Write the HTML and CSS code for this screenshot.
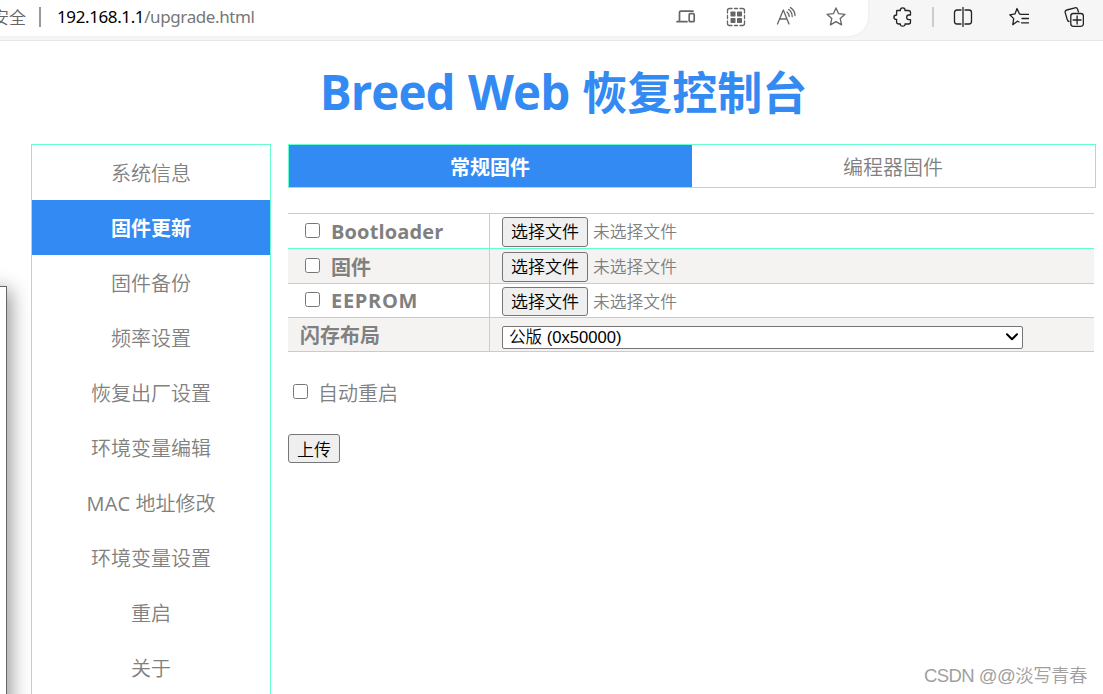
FILE: index.html
```html
<!DOCTYPE html>
<html lang="zh-CN">
<head>
<meta charset="utf-8">
<title>Breed Web 恢复控制台</title>
<link rel="stylesheet" href="styles.css">
</head>
<body>
<header class="toolbar">
  <div class="address">
    <div class="security">安全</div>
    <div class="address-sep"></div>
    <div class="url"><b class="host">192.168.1.1</b>/upgrade.html</div>
    <div class="address-icons">
      <svg class="device" width="20" height="20" viewBox="0 0 20 20"><path d="M3.500 13.500V5.500Q3.500 4.200 4.800 4.200H17M1 14.700H11" /><rect x="13.200" y="6.700" width="5" height="8" rx="1"/></svg>
      <svg width="20" height="20" viewBox="0 0 20 20"><path d="M1.500 6V3.500Q1.500 1.500 3.500 1.500H6M8.500 1.500h3M14 1.500h2.500Q18.500 1.500 18.500 3.500V6M1.500 8.500v3M18.500 8.500v3M1.500 14v2.500Q1.500 18.500 3.500 18.500H6M8.500 18.500h3M14 18.500h2.500Q18.500 18.500 18.500 16.500V14"/><g class="solid"><rect x="4.500" y="4.500" width="5" height="5" rx=".7"/><rect x="11" y="4.500" width="5" height="5" rx=".7"/><rect x="4.500" y="11" width="5" height="5" rx=".7"/><rect x="11" y="11" width="5" height="5" rx=".7"/></g></svg>
      <svg width="20" height="20" viewBox="0 0 20 20"><path d="M1.500 17L7.300 3L13 17M3.600 12H11M11 5Q13.200 6.800 13.200 9.500M12.700 2.500Q16.200 5 16.200 9.500M14.500.6Q19 3.500 19 8.500"/></svg>
      <svg width="20" height="20" viewBox="0 0 20 20"><path d="M10 .9L12.600 6.700L19 7.300L14.200 11.600L15.600 17.900L10 14.600L4.400 17.900L5.800 11.600L1 7.300L7.400 6.700Z"/></svg>
    </div>
  </div>
  <div class="actions">
    <svg width="20" height="20" viewBox="0 0 20 20"><path d="M4 3.500H7.400Q7.200 .8 9.700 .8Q12.200 .8 12 3.500H15Q17.500 3.500 17.500 5.500V8H15.700Q13.700 8 13.700 10.300Q13.700 12.600 15.700 12.600H17.500V15Q17.500 17 15.500 17H12Q12.200 19.200 9.700 19.200Q7.200 19.200 7.400 17H6Q3.600 17 3.600 15V12.500Q.9 12.500.9 10.200Q.9 8 3.600 8V5Q3.600 3.500 4 3.500Z"/></svg>
    <div class="action-sep"></div>
    <svg width="20" height="20" viewBox="0 0 20 20"><path d="M8 3H4Q1.500 3 1.500 5.500V14.500Q1.500 17 4 17H8M12 3H16Q18.500 3 18.500 5.500V14.500Q18.500 17 16 17H12M10 .5V19.500"/></svg>
    <svg width="20" height="20" viewBox="0 0 20 20"><path d="M10 15L8.400 14.200L3.800 17.700L4.700 11.600L.8 7.800L6 6.900L8 1.500L10.500 6.900L12 7.300H19.500M13 11.500H19.500M12.500 15.800H19.500"/></svg>
    <svg width="20" height="20" viewBox="0 0 20 20"><path d="M14.500 5L13.500 2Q13 .3 11 .8L2.800 3Q.7 3.600 1.200 5.600L3.200 12.500Q3.700 14.200 5 14.500"/><rect x="6.800" y="6.500" width="12.600" height="12.800" rx="2.500"/><path d="M13.100 9V17M9.100 13H17.100"/></svg>
  </div>
</header>
<main class="page">
  <h1 class="title"><span class="title-latin">Breed Web</span>恢复控制台</h1>
  <div class="columns">
    <nav class="menu">
      <a>系统信息</a>
      <a class="current">固件更新</a>
      <a>固件备份</a>
      <a>频率设置</a>
      <a>恢复出厂设置</a>
      <a>环境变量编辑</a>
      <a><span><span class="mac">MAC</span> 地址修改</span></a>
      <a>环境变量设置</a>
      <a>重启</a>
      <a>关于</a>
    </nav>
    <form class="content">
      <div class="tabs"><a class="current">常规固件</a><a>编程器固件</a></div>
      <div class="table">
        <div class="row">
          <label class="head"><input type="checkbox"><span class="boot">Bootloader</span></label>
          <div class="cell"><button type="button" class="btn file">选择文件</button><span class="none">未选择文件</span></div>
        </div>
        <div class="row shade">
          <label class="head"><input type="checkbox"><span class="cjk">固件</span></label>
          <div class="cell"><button type="button" class="btn file">选择文件</button><span class="none">未选择文件</span></div>
        </div>
        <div class="row low">
          <label class="head"><input type="checkbox"><span class="eeprom">EEPROM</span></label>
          <div class="cell"><button type="button" class="btn file">选择文件</button><span class="none">未选择文件</span></div>
        </div>
        <div class="row low shade">
          <div class="head"><span class="cjk">闪存布局</span></div>
          <div class="cell layout-cell"><div class="select"><span>公版 (0x50000)</span><svg width="12" height="8" viewBox="0 0 12 8"><path d="M1 1.200L6 6.200L11 1.200"/></svg></div></div>
        </div>
      </div>
      <label class="reboot"><input type="checkbox"><span>自动重启</span></label>
      <button type="button" class="btn upload">上传</button>
    </form>
  </div>
</main>
<div class="window-edge"></div>
<div class="watermark">CSDN @@淡写青春</div>
</body>
</html>
```
FILE: styles.css
```css
* { box-sizing: border-box; }
body {
  margin: 0;
  width: 1103px;
  height: 694px;
  overflow: hidden;
  position: relative;
  background: #fff;
  color: #808080;
  font: 350 20px/1 "Open Sans", "Noto Sans CJK SC", sans-serif;
}
svg { display: block; flex: none; fill: none; stroke: #666; stroke-width: 1.3; stroke-linejoin: round; stroke-linecap: round; }
.solid { fill: #666; stroke: none; }
.device { stroke-width: 1.7; }
.toolbar { height: 41px; display: flex; background: #f6f6f6; border-bottom: 1px solid #e6e6e6; }
.address {
  flex: none; width: 868px; height: 36px; display: flex; align-items: center; padding-bottom: 2px;
  background: #fff; border-radius: 0 0 19px 0; box-shadow: 0 0 3px #e4e4e4;
  font-size: 17px;
}
.security { width: 26px; display: flex; justify-content: flex-end; color: #666; white-space: nowrap; }
.address-sep { width: 2px; height: 20px; margin: 0 17px 0 13px; background: #999; }
.url { font-family: "Noto Sans", sans-serif; font-weight: 400; letter-spacing: -.39px; color: #777; width: 619px; padding-bottom: 2px; margin-left: -1px; white-space: nowrap; }
.host { font-weight: 400; color: #000; }
.address-icons { display: flex; gap: 30px; }
.actions { display: flex; align-items: center; height: 34px; padding-left: 25px; }
.actions svg { stroke: #222; margin-right: 36px; }
.actions svg:first-child { margin-right: 19px; }
.actions svg:nth-last-child(2) { margin-right: 35px; }
.actions svg:last-child { margin-right: 0; }
.action-sep { width: 2px; height: 20px; margin-right: 19px; background: #ccc; }
.page { padding: 26px 7px 0 31px; }
.title {
  margin: 0; height: 77px; display: flex; justify-content: center; align-items: flex-start;
  font-size: 45px; font-weight: 700; line-height: 52px; color: #338af3; white-space: nowrap;
}
.title-latin { font-size: 47.500px; line-height: 50px; letter-spacing: -.950px; word-spacing: 2px; margin-right: 13px; }
.columns { display: flex; gap: 17px; align-items: flex-start; }
.menu { width: 240px; height: 560px; border: 1px solid #6fc; }
.menu a { display: flex; height: 55px; padding-top: 2px; align-items: center; justify-content: center; }
.mac { font-weight: 400; letter-spacing: .2px; }
.current { background: #338af3; color: #fff; font-weight: 700; }
.content { width: 808px; }
.tabs { display: flex; height: 44px; border: 1px solid #6fc; }
.tabs a { flex: 1; display: flex; align-items: center; justify-content: center; padding: 3px 1px 0 0; }
.table { width: 806px; margin-top: 25px; border-top: 1px solid #6fc; }
.row { display: flex; height: 35px; border-bottom: 1px solid #6fc; }
.low { height: 34px; }
.shade { background: #f4f3f1; }
.head { width: 202px; display: flex; align-items: center; padding-left: 12px; border-right: 1px solid #6fc; font-weight: 700; }
.boot { padding-top: 1px; letter-spacing: .15px; }
.cjk { padding-top: 3px; }
.eeprom { letter-spacing: .7px; }
input { width: 15px; height: 15px; margin: 0 11px 2px 5px; }
.cell { display: flex; align-items: center; padding: 2px 0 0 12px; }
.btn { height: 30px; padding: 0 0 3px; border: 1px solid #767676; border-radius: 3px; background: #efefef; color: #000; font: 350 17px/1 "Noto Sans CJK SC", sans-serif; }
.file { width: 86px; }
.low .file { height: 29px; }
.none { margin-left: 5px; padding-top: 1px; font-size: 16.800px; }
.select { width: 521px; height: 23px; padding: 0 4px 0 6px; display: flex; align-items: center; justify-content: space-between; border: 1px solid #767676; border-radius: 2px; background: #fff; color: #000; font: 350 16.600px/1 "Liberation Sans", "Noto Sans CJK SC", sans-serif; }
.select span { padding-top: 2px; }
.layout-cell { padding-top: 5px; }
.select svg { stroke: #000; stroke-width: 2; }
.reboot { display: flex; align-items: center; height: 28px; margin-top: 27px; }
.reboot input { margin-right: 10px; margin-bottom: 4px; }
.reboot span { padding-top: 2px; }
.upload { width: 52px; height: 29px; padding-bottom: 1px; margin-top: 27px; display: block; }
.window-edge { position: absolute; left: -20px; top: 286px; width: 27px; height: 430px; background: #fff; border: 1px solid #666; box-shadow: 3px 4px 20px rgba(0,0,0,.45); }
.watermark { position: absolute; right: 16px; bottom: 7px; font: 350 18.500px/22px "Liberation Sans", "Noto Sans CJK SC", sans-serif; letter-spacing: -.550px; color: #a0a0a0; white-space: nowrap; }
```
